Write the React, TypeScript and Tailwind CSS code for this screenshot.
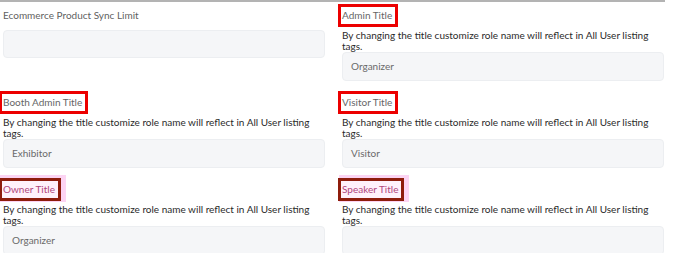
import * as React from 'react';

type Field = {
  label: string;
  value: string;
  hint?: boolean;
  mark?: 'red' | 'dark' | 'none';
};

const HINT = 'By changing the title customize role name will reflect in All User listing tags.';

const fields: Field[] = [
  { label: 'Ecommerce Product Sync Limit', value: '', mark: 'none' },
  { label: 'Admin Title', value: 'Organizer', hint: true, mark: 'red' },
  { label: 'Booth Admin Title', value: 'Exhibitor', hint: true, mark: 'red' },
  { label: 'Visitor Title', value: 'Visitor', hint: true, mark: 'red' },
  { label: 'Owner Title', value: 'Organizer', hint: true, mark: 'dark' },
  { label: 'Speaker Title', value: '', hint: true, mark: 'dark' },
];

function Label({ text, mark }: { text: string; mark?: Field['mark'] }) {
  if (mark === 'none') {
    return (
      <div className="h-[23px] flex items-center text-[10px] text-[#5f5f5f]">{text}</div>
    );
  }
  const dark = mark === 'dark';
  return (
    <div className="h-[23px] flex">
      <span
        className={
          dark
            ? '-ml-[4px] flex items-center border-[3px] border-[#8e1c0c] bg-[#fff1fb] pl-[1px] pr-[3px] text-[10px] text-[#b0467c] shadow-[3px_-1px_0_2px_#fcd4f3]'
            : '-ml-[4px] flex items-center border-[3px] border-[#ec0000] pl-[1px] pr-[3px] text-[10px] text-[#666666]'
        }
      >
        {text}
      </span>
    </div>
  );
}

function FieldCell({ field }: { field: Field }) {
  return (
    <div className="flex flex-col">
      <Label text={field.label} mark={field.mark} />
      {field.hint ? (
        <p className="mt-[3px] text-[10px] leading-[11px] text-[#2a2a2a] pr-[8px]">{HINT}</p>
      ) : null}
      <div
        className={
          (field.hint ? 'h-[29px] ' : 'mt-[3px] h-[28px] ') +
          'rounded-[4px] border border-[#eceef1] bg-[#f5f6f8] flex items-center pl-[8px] text-[10px] text-[#6a6a6a]'
        }
      >
        {field.value}
      </div>
    </div>
  );
}

export default function App() {
  return (
    <div className="w-[688px] h-[253px] bg-white overflow-hidden" style={{ fontFamily: 'Lato, "Open Sans", sans-serif' }}>
      <div className="w-[665px] h-[2px] bg-[#b3b3b3]" />
      <div className="pl-[3px] pt-[2px] grid grid-cols-[322px_322px] gap-x-[17px] gap-y-[10px]">
        {fields.map((f) => (
          <FieldCell key={f.label} field={f} />
        ))}
      </div>
    </div>
  );
}
